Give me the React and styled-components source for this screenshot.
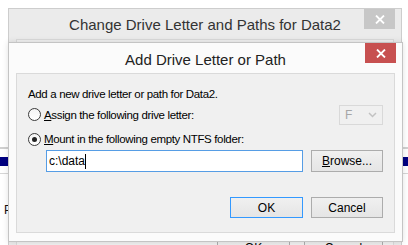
import React from "react";
import styled, { createGlobalStyle } from "styled-components";

const GlobalStyle = createGlobalStyle`
  html, body {
    margin: 0;
    padding: 0;
    background: #ffffff;
  }
  body {
    font-family: "Liberation Sans", Arial, sans-serif;
  }
`;

const Desktop = styled.div`
  position: relative;
  width: 408px;
  height: 245px;
  overflow: hidden;
  background: #ffffff;
`;

const ListLine = styled.div`
  position: absolute;
  left: 0;
  right: 0;
  top: ${(p) => p.$top}px;
  height: ${(p) => p.$h}px;
  background: ${(p) => p.$color};
`;

const ListText = styled.div`
  position: absolute;
  left: 4px;
  top: 203px;
  font-size: 12px;
  color: #111;
`;

const Window = styled.div`
  position: absolute;
  left: ${(p) => p.$left}px;
  top: ${(p) => p.$top}px;
  width: ${(p) => p.$width}px;
  height: ${(p) => p.$height}px;
  box-sizing: border-box;
  border: 1px solid ${(p) => (p.$active ? "#c4c4c4" : "#cdcdcd")};
  background: ${(p) => (p.$active ? "#fbfbfb" : "#ebebeb")};
  display: flex;
  flex-direction: column;
  box-shadow: ${(p) => (p.$active ? "0 0 6px rgba(0,0,0,0.12)" : "none")};
`;

const TitleBar = styled.div`
  position: relative;
  height: 30px;
  flex: none;
  display: flex;
  align-items: center;
  justify-content: center;
  padding-top: ${(p) => p.$shift}px;
  box-sizing: border-box;
`;

const TitleText = styled.div`
  font-family: "Liberation Sans", Arial, sans-serif;
  font-size: 15px;
  color: ${(p) => p.$color};
`;

const CloseButton = styled.div`
  position: absolute;
  top: 0;
  right: 6px;
  width: 31px;
  height: 20px;
  background: ${(p) => p.$color};
  display: flex;
  align-items: center;
  justify-content: center;
`;

const Client = styled.div`
  margin: 0 7px;
  flex: ${(p) => (p.$fill ? "1" : "none")};
  height: ${(p) => (p.$height ? `${p.$height}px` : "auto")};
  box-sizing: border-box;
  border: 1px solid #dadada;
  background: #f0f0f0;
  display: flex;
  flex-direction: column;
  padding: ${(p) => p.$pad};
  font-size: 11.5px;
  color: #000;
`;

const Intro = styled.div`
  height: 16px;
  line-height: 16px;
  padding-left: 11px;
  letter-spacing: -0.35px;
`;

const OptionRow = styled.div`
  display: flex;
  align-items: center;
  height: ${(p) => p.$h}px;
  margin-top: ${(p) => p.$mt}px;
  padding-left: 11px;
  padding-right: 11px;
`;

const Radio = styled.span`
  width: 13px;
  height: 13px;
  box-sizing: border-box;
  border-radius: 50%;
  border: 1px solid #3b3b3b;
  background: linear-gradient(#f4f4f4, #ffffff);
  display: flex;
  align-items: center;
  justify-content: center;
  flex: none;

  &::after {
    content: "";
    display: ${(p) => (p.$checked ? "block" : "none")};
    width: 5px;
    height: 5px;
    border-radius: 50%;
    background: #222;
  }
`;

const Label = styled.span`
  margin-left: 3px;
  flex: 1;
  letter-spacing: -0.35px;
`;

const Select = styled.div`
  width: 44px;
  height: 20px;
  box-sizing: border-box;
  border: 1px solid #d9d9d9;
  background: #f0f0f0;
  display: flex;
  align-items: center;
  justify-content: space-between;
  padding: 0 5px 0 5px;
  color: #a6a6a6;
  font-size: 12px;
`;

const InputRow = styled.div`
  display: flex;
  align-items: center;
  gap: 8px;
  margin-top: 1px;
  padding-left: 29px;
  padding-right: 11px;
`;

const TextBox = styled.div`
  flex: 1;
  height: 22px;
  box-sizing: border-box;
  border: 1px solid #569de5;
  background: #fff;
  display: flex;
  align-items: center;
  padding-left: 2px;
  font-size: 12px;
`;

const Caret = styled.span`
  display: inline-block;
  width: 1px;
  height: 15px;
  background: #000;
`;

const Button = styled.div`
  width: ${(p) => p.$w}px;
  height: ${(p) => p.$h}px;
  box-sizing: border-box;
  border: 1px solid ${(p) => (p.$default ? "#3399ff" : "#acacac")};
  background: linear-gradient(#f0f0f0, #e5e5e5);
  display: flex;
  align-items: center;
  justify-content: center;
  font-size: 12px;
  color: #000;
  flex: none;
`;

const ButtonRow = styled.div`
  display: flex;
  justify-content: flex-end;
  gap: ${(p) => p.$gap}px;
  margin-top: ${(p) => p.$mt}px;
  padding-right: ${(p) => p.$pr}px;
`;

const CloseX = () => (
  <svg width="10" height="9" viewBox="0 0 10 9">
    <path d="M1 0.5 L9 8.5 M9 0.5 L1 8.5" stroke="#fff" strokeWidth="1.8" />
  </svg>
);

const Chevron = () => (
  <svg width="9" height="6" viewBox="0 0 9 6">
    <path d="M1 1 L4.5 4.5 L8 1" stroke="#c2c2c2" strokeWidth="1.5" fill="none" />
  </svg>
);

export default function App() {
  return (
    <>
      <GlobalStyle />
      <Desktop>
        <ListLine $top={147} $h={2} $color="#d0d0d0" />
        <ListLine $top={157} $h={9} $color="#000080" />
        <ListLine $top={173} $h={1} $color="#d6d6d6" />
        <ListText>Pr</ListText>

        <Window $left={8} $top={8} $width={394} $height={250}>
          <TitleBar $shift={0}>
            <TitleText $color="#333">
              Change Drive Letter and Paths for Data2
            </TitleText>
            <CloseButton $color="#c7c7c7">
              <CloseX />
            </CloseButton>
          </TitleBar>
          <Client $fill $pad="196px 0 0 0">
            <ButtonRow $gap={14} $mt={0} $pr={10}>
              <Button $w={73} $h={23}>OK</Button>
              <Button $w={79} $h={23}>Cancel</Button>
            </ButtonRow>
          </Client>
        </Window>

        <Window $left={8} $top={42} $width={395} $height={200} $active>
          <TitleBar $shift={2}>
            <TitleText $color="#222">Add Drive Letter or Path</TitleText>
            <CloseButton $color="#c75050">
              <CloseX />
            </CloseButton>
          </TitleBar>
          <Client $height={160} $pad="12px 0 0 0">
            <Intro>Add a new drive letter or path for Data2.</Intro>
            <OptionRow $h={21} $mt={2}>
              <Radio />
              <Label>
                <u>A</u>ssign the following drive letter:
              </Label>
              <Select>
                <span>F</span>
                <Chevron />
              </Select>
            </OptionRow>
            <OptionRow $h={20} $mt={4}>
              <Radio $checked />
              <Label>
                <u>M</u>ount in the following empty NTFS folder:
              </Label>
            </OptionRow>
            <InputRow>
              <TextBox>
                c:\data
                <Caret />
              </TextBox>
              <Button $w={72} $h={22}>
                <span>
                  <u>B</u>rowse...
                </span>
              </Button>
            </InputRow>
            <ButtonRow $gap={8} $mt={25} $pr={11}>
              <Button $w={73} $h={21} $default>
                OK
              </Button>
              <Button $w={72} $h={21}>Cancel</Button>
            </ButtonRow>
          </Client>
        </Window>
      </Desktop>
    </>
  );
}
